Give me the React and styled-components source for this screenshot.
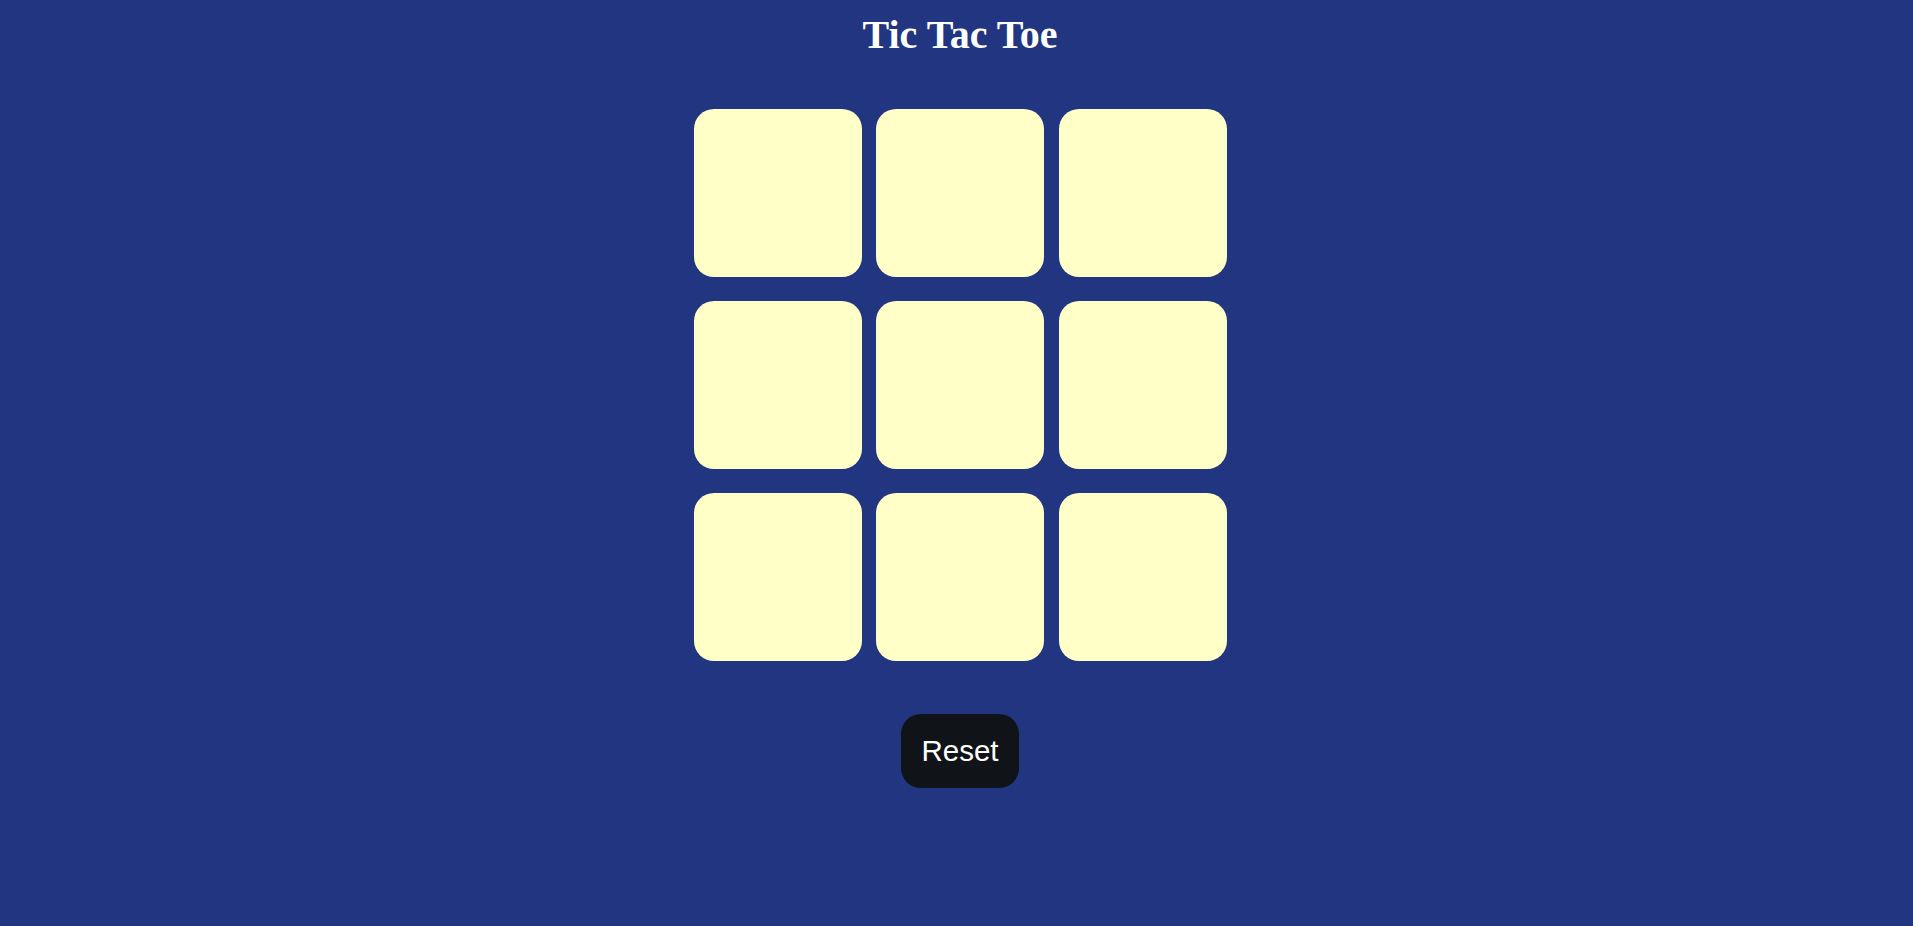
import React, { useState } from "react";
import styled, { createGlobalStyle } from "styled-components";

const GlobalStyle = createGlobalStyle`
  html, body {
    margin: 0;
    padding: 0;
    background-color: #213580;
  }
`;

const Page = styled.div`
  display: flex;
  flex-direction: column;
  align-items: center;
  min-height: 100vh;
  padding-left: 7px;
  box-sizing: border-box;
`;

const Title = styled.h1`
  margin: 11px 0 0;
  font-family: "Liberation Serif", "Times New Roman", serif;
  font-size: 40px;
  font-weight: bold;
  color: #ffffff;
`;

const Board = styled.div`
  display: grid;
  grid-template-columns: repeat(3, 168px);
  grid-auto-rows: 168px;
  column-gap: 14.5px;
  row-gap: 24px;
  margin-top: 51px;
`;

const Cell = styled.button`
  border: none;
  border-radius: 20px;
  background-color: #ffffc8;
  padding: 0;
  cursor: pointer;
  font-family: "Liberation Sans", Arial, sans-serif;
  font-size: 72px;
  color: #213580;
`;

const ResetButton = styled.button`
  margin-top: 53px;
  padding: 20px 20px;
  border: none;
  border-radius: 20px;
  background-color: #101418;
  color: #ffffff;
  font-family: "Liberation Sans", Arial, sans-serif;
  font-size: 29.5px;
  line-height: 34px;
  cursor: pointer;
`;

export default function App() {
  const [cells, setCells] = useState(Array(9).fill(""));
  const [turn, setTurn] = useState("X");

  const play = (i) => {
    if (cells[i]) return;
    const next = [...cells];
    next[i] = turn;
    setCells(next);
    setTurn(turn === "X" ? "O" : "X");
  };

  return (
    <>
      <GlobalStyle />
      <Page>
        <Title>Tic Tac Toe</Title>
        <Board>
          {cells.map((c, i) => (
            <Cell key={i} onClick={() => play(i)}>
              {c}
            </Cell>
          ))}
        </Board>
        <ResetButton
          onClick={() => {
            setCells(Array(9).fill(""));
            setTurn("X");
          }}
        >
          Reset
        </ResetButton>
      </Page>
    </>
  );
}
